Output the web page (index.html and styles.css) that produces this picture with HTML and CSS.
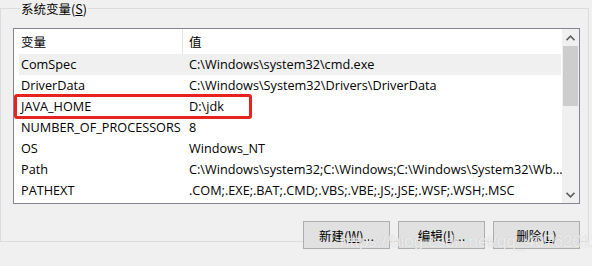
FILE: index.html
```html
<!DOCTYPE html>
<html lang="zh-CN">
<head>
<meta charset="utf-8">
<link rel="stylesheet" href="styles.css">
</head>
<body>
<fieldset class="group">
  <legend class="group-title">系统变量(<u>S</u>)</legend>
  <div class="list">
    <div class="list-main">
      <div class="list-head">
        <div class="col-name">变量</div>
        <div class="col-val">值</div>
      </div>
      <div class="row row-sel"><div class="col-name">ComSpec</div><div class="col-val">C:\Windows\system32\cmd.exe</div></div>
      <div class="row"><div class="col-name">DriverData</div><div class="col-val">C:\Windows\System32\Drivers\DriverData</div></div>
      <div class="row row-mark"><div class="col-name">JAVA_HOME</div><div class="col-val">D:\jdk</div></div>
      <div class="row"><div class="col-name">NUMBER_OF_PROCESSORS</div><div class="col-val">8</div></div>
      <div class="row"><div class="col-name">OS</div><div class="col-val">Windows_NT</div></div>
      <div class="row"><div class="col-name">Path</div><div class="col-val">C:\Windows\system32;C:\Windows;C:\Windows\System32\Wb...</div></div>
      <div class="row"><div class="col-name">PATHEXT</div><div class="col-val">.COM;.EXE;.BAT;.CMD;.VBS;.VBE;.JS;.JSE;.WSF;.WSH;.MSC</div></div>
    </div>
    <div class="scrollbar">
      <div class="sb-btn">
        <svg width="9" height="6" viewBox="0 0 9 6"><path d="M0.5 5.2 L4.5 1.2 L8.5 5.2" fill="none" stroke="#606060" stroke-width="1.6"/></svg>
      </div>
      <div class="sb-track"><div class="sb-thumb"></div></div>
      <div class="sb-btn">
        <svg width="9" height="6" viewBox="0 0 9 6"><path d="M0.5 0.8 L4.5 4.8 L8.5 0.8" fill="none" stroke="#606060" stroke-width="1.6"/></svg>
      </div>
    </div>
  </div>
  <div class="buttons">
    <div class="btn">新建(<u>W</u>)...</div>
    <div class="btn">编辑(<u>I</u>)...</div>
    <div class="btn">删除(<u>L</u>)</div>
  </div>
</fieldset>
<div class="watermark">https://blog.csdn.net/qq_40762011</div>
</body>
</html>
```
FILE: styles.css
```css
html, body {
  margin: 0;
  padding: 0;
}
body {
  width: 592px;
  height: 266px;
  background: #f0f0f0;
  font-family: "Open Sans", "Noto Sans CJK SC", sans-serif;
  font-size: 12.7px;
  color: #000;
  position: relative;
  overflow: hidden;
}
u {
  text-decoration: underline;
  text-underline-offset: 1px;
}
.group {
  margin: 0;
  width: 567px;
  height: 229px;
  border: 1px solid #dcdcdc;
  padding: 11px 8px 0 12px;
  min-width: 0;
  box-sizing: content-box;
}
.group-title {
  padding: 0 1px;
  margin-left: 7px;
  height: 17px;
  line-height: 17px;
  font-size: 12.5px;
  font-family: "Noto Sans CJK SC", sans-serif;
}
.list {
  width: 565px;
  height: 174px;
  border: 1px solid #828790;
  background: #fff;
  display: flex;
}
.list-main {
  flex: 1;
  min-width: 0;
  padding-left: 5px;
  padding-right: 1px;
}
.list-head {
  display: flex;
  height: 25px;
  align-items: center;
  font-family: "Noto Sans CJK SC", sans-serif;
  font-size: 12.5px;
}
.list-head .col-name {
  border-right: 1px solid #e5e5e5;
  height: 25px;
  line-height: 25px;
  box-sizing: border-box;
}
.row {
  display: flex;
  height: 21px;
  line-height: 21px;
  white-space: nowrap;
}
.row-sel {
  background: #f0f0f0;
}
.col-name {
  width: 164px;
  padding-left: 2px;
  box-sizing: border-box;
  flex: none;
}
.col-val {
  padding-left: 6px;
}
.row-mark {
  position: relative;
}
.row-mark::after {
  content: "";
  position: absolute;
  left: -5px;
  top: -2px;
  width: 238px;
  height: 25px;
  box-sizing: border-box;
  border: 3px solid #e8231f;
  border-radius: 3px;
}
.scrollbar {
  width: 17px;
  flex: none;
  background: #f0f0f0;
  display: flex;
  flex-direction: column;
}
.sb-btn {
  height: 17px;
  display: flex;
  align-items: center;
  justify-content: center;
}
.sb-track {
  flex: 1;
  padding: 0 1px;
}
.sb-thumb {
  height: 60px;
  background: #cdcdcd;
}
.buttons {
  display: flex;
  justify-content: flex-end;
  gap: 8px;
  margin-top: 17px;
}
.btn {
  width: 85px;
  height: 26px;
  border: 1px solid #adadad;
  background: #e1e1e1;
  display: flex;
  align-items: center;
  justify-content: center;
  font-family: "Noto Sans CJK SC", sans-serif;
  font-size: 12.5px;
}
.watermark {
  position: absolute;
  left: 340px;
  top: 232px;
  font-family: "Liberation Sans", sans-serif;
  font-size: 17px;
  color: rgba(255, 255, 255, 0.7);
  text-shadow: 0 0 1px rgba(160, 160, 160, 0.55);
  white-space: nowrap;
}
```
